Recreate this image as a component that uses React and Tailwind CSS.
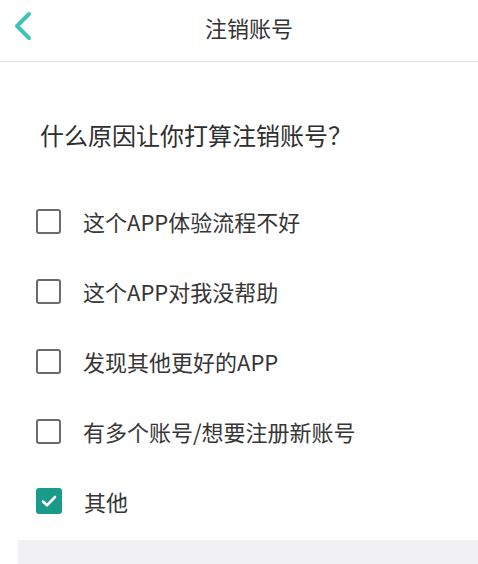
const reasons = [
  { label: '这个APP体验流程不好', checked: false },
  { label: '这个APP对我没帮助', checked: false },
  { label: '发现其他更好的APP', checked: false },
  { label: '有多个账号/想要注册新账号', checked: false },
  { label: '其他', checked: true },
];

function CheckBox({ checked }) {
  if (checked) {
    return (
      <span className="flex h-[26px] w-[26px] items-center justify-center rounded-[3px] bg-[#1a9a88]">
        <svg width="18" height="18" viewBox="0 0 18 18" fill="none">
          <path d="M3 9.5l4 3.8L15 5" stroke="#fff" strokeWidth="2.6" strokeLinecap="round" strokeLinejoin="round" />
        </svg>
      </span>
    );
  }
  return <span className="block h-[25px] w-[25px] rounded-[3px] border-[2.5px] border-[#6b6b6b] bg-white" />;
}

export default function App() {
  return (
    <div
      className="h-[564px] w-[478px] overflow-hidden bg-white text-[#333]"
      style={{ fontFamily: '"Noto Sans CJK SC", "Noto Sans", sans-serif' }}
    >
      <div className="relative flex h-[62px] items-center justify-center border-b border-[#e3e3e3]">
        <button className="absolute left-[8px] top-[8px] flex h-[36px] w-[30px] items-center justify-center">
          <svg width="22" height="30" viewBox="0 0 22 30" fill="none">
            <path d="M17 3L5 15l12 12" stroke="#3fc2ba" strokeWidth="4" strokeLinecap="round" strokeLinejoin="round" />
          </svg>
        </button>
        <h1 className="mb-[8px] ml-[20px] text-[22px] leading-none text-[#333]">注销账号</h1>
      </div>

      <h2 className="pl-[40px] pt-[56px] text-[24px] leading-[34px] text-[#2e2e2e]">什么原因让你打算注销账号？</h2>

      <ul className="mt-[34px]">
        {reasons.map((r) => (
          <li key={r.label} className="flex h-[70px] items-center gap-[22px] pl-[36px]">
            <CheckBox checked={r.checked} />
            <span className="text-[22px] leading-none text-[#363636]">{r.label}</span>
          </li>
        ))}
      </ul>

      <div className="ml-[18px] mt-[4px] h-[60px] bg-[#f1f1f4]" />
    </div>
  );
}
